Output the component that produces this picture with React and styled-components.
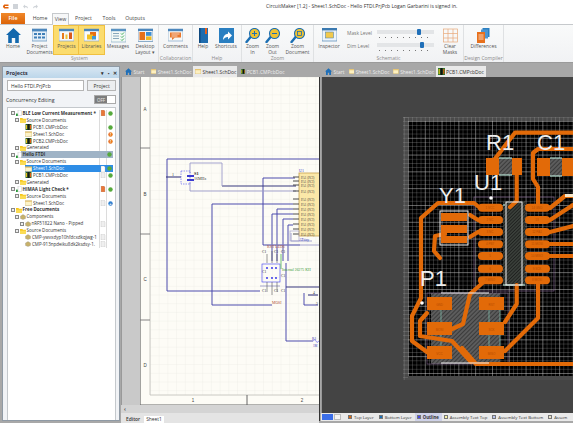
import React from "react";
import styled, { createGlobalStyle } from "styled-components";

const Global = createGlobalStyle`
  html, body { margin: 0; padding: 0; background: #fff; overflow: hidden; }
  body { font-family: "Open Sans", "Liberation Sans", sans-serif; }
  * { box-sizing: border-box; }
`;

const Win = styled.div`
  width: 573px; height: 423px; display: flex; flex-direction: column;
  background: #fff; font-size: 5.2px; color: #333; overflow: hidden;
`;
const TitleBar = styled.div`
  height: 12px; flex: none; display: flex; align-items: center; padding-left: 2px; gap: 3px; position: relative;
`;
const Title = styled.div`
  position: absolute; left: 266px; top: 3px; font-size: 5px; line-height: 7px; color: #333; white-space: nowrap;
`;
const QuickIcon = styled.svg`width: 7px; height: 7px; flex: none;`;
const MenuRow = styled.div`
  height: 12px; flex: none; display: flex; align-items: flex-end; padding-left: 1px; position: relative; z-index: 1;
`;
const FileTab = styled.div`
  width: 24px; height: 11px; background: linear-gradient(#f0882a, #dc6408); color: #fff; font-weight: 600;
  text-align: center; line-height: 11px; font-size: 5.4px; margin-right: 3px;
`;
const MenuTab = styled.div`
  height: ${p => (p.$on ? "12px" : "11px")}; width: ${p => p.$w}px; text-align: center; line-height: 11px; font-size: 5.2px; color: #444;
  background: ${p => (p.$on ? "#f6f7f8" : "transparent")};
  border: ${p => (p.$on ? "1px solid #c6c9cc" : "0")};
  border-bottom: 0; margin-bottom: ${p => (p.$on ? "-1px" : "0")};
`;
const Ribbon = styled.div`
  height: 39px; flex: none; display: flex; background: linear-gradient(#f9fafa, #f1f2f4);
  border-top: 1px solid #c6c9cc; border-bottom: 1px solid #9b9b9b;
`;
const Group = styled.div`
  width: ${p => p.$w}px; flex: none; display: flex; flex-direction: column; border-right: 1px solid #dfe1e3; padding: 1px 0 0 ${p => p.$pad || 0}px;
`;
const GroupRow = styled.div`display: flex; height: 28px; flex: none;`;
const GroupLabel = styled.div`
  text-align: center; font-size: 5px; line-height: 8px; color: #8a8a8a; white-space: nowrap;
`;
const Item = styled.div`
  width: ${p => p.$w}px; flex: none; display: flex; flex-direction: column; align-items: center; padding-top: 2px;
  background: ${p => (p.$on ? "#fbdc6e" : "transparent")}; outline: ${p => (p.$on ? "0.5px solid #f0c040" : "0")};
`;
const ItemIcon = styled.svg`width: 15px; height: 15px; flex: none;`;
const ItemLabel = styled.div`
  font-size: 4.9px; line-height: 6px; text-align: center; color: #555; white-space: pre-line;
`;
const SliderCol = styled.div`
  width: 93px; flex: none; display: flex; flex-direction: column; gap: 3px; padding: 3px 0 0 3px;
`;
const SliderRow = styled.div`display: flex; align-items: flex-start; height: 10px;`;
const SliderName = styled.div`width: 30px; font-size: 4.9px; line-height: 8px; color: #777;`;
const Track = styled.div`
  width: 57px; height: 10px; position: relative;
  background: linear-gradient(#e3e5e7, #e3e5e7) 0 1px / 100% 4px no-repeat;
`;
const Dots = styled.div`
  position: absolute; left: 2px; right: 2px; bottom: 1px; height: 1.5px;
  background: repeating-linear-gradient(90deg, #777 0 1px, transparent 1px 6px);
`;
const Thumb = styled.div`
  position: absolute; top: 0; left: ${p => p.$x}px; width: 3.5px; height: 6px; border-radius: 1px; background: #1f6fb8;
`;

const Body = styled.div`
  flex: 1; min-height: 0; display: flex; background: #a8a8a8; padding: 3px 0 2px 2px; gap: 1px;
`;
const ProjectsPanel = styled.div`
  width: 118px; flex: none; display: flex; flex-direction: column; background: #f1f3f6; border: 0.5px solid #8f9aa5;
`;
const PanelHead = styled.div`
  height: 11px; flex: none; display: flex; align-items: center; justify-content: space-between; padding: 0 2px 0 3px;
  background: linear-gradient(#d7e6f2, #bcd6ea); font-size: 5.4px; font-weight: 700; color: #334;
`;
const PanelBtns = styled.div`display: flex; gap: 3.5px; font-size: 4.5px; font-weight: 700; color: #333;`;
const InputRow = styled.div`display: flex; gap: 3px; padding: 2px 3px 0 4px; height: 13px; flex: none;`;
const NameInput = styled.div`
  width: 78px; height: 11px; background: #fff; border: 0.5px solid #b5b5b5; padding-left: 3px; line-height: 10px; font-size: 5px;
`;
const SmallBtn = styled.div`
  width: 29px; height: 11px; background: #eceef0; border: 0.5px solid #b5b5b5; text-align: center; line-height: 10px; font-size: 5px;
`;
const ConcRow = styled.div`
  display: flex; justify-content: space-between; align-items: center; padding: 3px 3px 0 3px; height: 14px; flex: none; font-size: 5.2px;
`;
const Toggle = styled.div`
  width: 22px; height: 9px; background: #fff; border: 0.5px solid #aaa; display: flex;
`;
const ToggleOff = styled.div`
  width: 12px; background: #7c7c7c; color: #eee; text-align: center; font-size: 4.4px; line-height: 8px;
`;
const TreeBox = styled.div`
  flex: 1; margin: 2px 3px 0 4px; background: #fff; border: 0.5px solid #c4c8cc; padding: 2px 2px 0 0; border-bottom: 0;
`;
const TreeRow = styled.div`
  height: 6.9px; display: flex; align-items: center; font-size: 4.5px; line-height: 6.9px; position: relative; color: #333;
  font-weight: ${p => (p.$bold ? 700 : 400)};
`;
const TreeName = styled.div`
  flex: 1; min-width: 0; display: flex; align-items: center; height: 100%; padding-left: ${p => p.$x}px; white-space: nowrap; overflow: hidden;
  background: ${p => (p.$sel === "blue" ? "linear-gradient(90deg,#fff 0 17px,#2e8de6 17px)" : p.$sel === "gray" ? "linear-gradient(90deg,#fff 0 13px,#9fb3c6 13px)" : "transparent")};
  color: ${p => (p.$sel === "blue" ? "#fff" : "inherit")};
`;
const StatusCell = styled.div`
  width: ${p => p.$w}px; flex: none; height: 100%; display: flex; align-items: center; justify-content: center;
  border-left: ${p => (p.$sel ? "0" : "0.5px solid #dcdcdc")};
  background: ${p => (p.$sel === "blue" ? "#2e8de6" : p.$sel === "gray" ? "#9fb3c6" : "transparent")};
`;
const Mini = styled.svg`width: 6px; height: 6px; flex: none; margin-right: ${p => p.$mr ?? 1}px;`;
const Expander = styled.div`
  width: 4px; height: 4px; flex: none; border: 0.5px solid #888; background: #eee; margin-right: 0.5px;
`;

const DocPane = styled.div`
  flex: none; width: ${p => p.$w}px; display: flex; flex-direction: column; min-height: 0; background: #a8a8a8;
`;
const DocTabs = styled.div`
  height: 11px; flex: none; display: flex; align-items: stretch; padding-left: 2px; background: #a8a8a8; gap: 1.5px;
`;
const DocTab = styled.div`
  width: ${p => p.$w}px; flex: none; display: flex; align-items: center; gap: 1.5px; padding-left: 2px; font-size: 4.9px; white-space: nowrap;
  color: ${p => (p.$on ? "#333" : "#eee")}; background: ${p => (p.$on ? "#e9e9e9" : "transparent")};
`;
const SchArea = styled.div`
  flex: 1; min-height: 0; display: flex; flex-direction: column; background: #fff; border-right: 1.5px solid #333;
`;
const SheetWrap = styled.div`
  flex: none; height: 328px; display: flex; padding-left: 18px; background: #c9c9c9; border-left: 1px solid #999; overflow: hidden;
`;
const ScrollBar = styled.div`
  height: 8px; flex: none; background: #d4d4d4; padding-left: 3px; font-size: 5px; line-height: 8px; font-weight: 700; color: #444;
`;
const SheetTabs = styled.div`
  height: 11px; flex: none; background: #e4e4e4; display: flex; align-items: center; font-size: 4.9px; padding: 2px 0 0 3px; gap: 2px;
`;
const SheetTab = styled.div`
  background: ${p => (p.$on ? "#fff" : "transparent")}; padding: 0 2px; line-height: 7px; font-weight: ${p => (p.$on ? 400 : 600)};
`;
const PcbArea = styled.div`
  flex: 1; min-height: 0; display: flex; background: #444; padding: 40px 0 31px 81px; border-left: 1px solid #999;
`;
const StatusBar = styled.div`
  height: 8px; flex: none; background: #e9e9e9; display: flex; align-items: center; font-size: 4.3px; white-space: nowrap; overflow: hidden; padding-left: 1px;
`;
const LayerSwatchBlock = styled.div`
  width: 11px; height: 6px; background: #3b6ee8; margin-right: 1px; flex: none;
`;
const Counter = styled.div`
  width: 7px; height: 6px; background: #f4f4f4; border: 0.5px solid #bbb; margin-right: 5px; flex: none;
`;
const LayerTab = styled.div`
  display: flex; align-items: center; gap: 2px; height: 100%; padding: 0 3px 0 2px; flex: none;
  background: ${p => (p.$on ? "#cfd2e8" : "transparent")}; font-weight: ${p => (p.$on ? 700 : 400)};
`;
const Swatch = styled.div`
  width: 4px; height: 4px; flex: none; background: ${p => p.$c}; border: 0.3px solid #777;
`;

/* ---------- small drawings ---------- */
const Folder = ({ mr }) => (
  <Mini viewBox="0 0 6 6" $mr={mr}><path d="M0 1h2.4l.6.8H6V6H0z" fill="#f5c518" /><path d="M0 2.6h6V6H0z" fill="#fbdc55" /></Mini>
);
const DocSmall = ({ c = "#e8e8e8", mr }) => (
  <Mini viewBox="0 0 6 6" $mr={mr}><path d="M1 0h3l1 1v5H1z" fill={c} stroke="#aaa" strokeWidth=".3" /></Mini>
);
const ProjDoc = () => (
  <Mini viewBox="0 0 6 6"><path d="M2 0h2.5l1 1v4.5H2z" fill="#fff" stroke="#999" strokeWidth=".3" /><rect x="0" y="3.6" width="1.8" height="2.4" fill="#2a9a3a" /></Mini>
);
const PcbMini = () => (
  <Mini viewBox="0 0 6 6" style={{ width: 7 }}><rect width="6" height="6" fill="#2a6a2a" /><rect x="2" y="0" width="2" height="6" fill="#1a1a1a" /><rect x=".4" y="1" width="1.2" height="4" fill="#e8c020" /><rect x="4.4" y="1" width="1.2" height="4" fill="#e05a10" /></Mini>
);
const SchMini = () => (
  <Mini viewBox="0 0 7 6" style={{ width: 7 }}><rect y=".8" width="7" height="4.6" fill="#fdf3c8" stroke="#b59a48" strokeWidth=".4" /><rect y=".8" width="7" height="1.1" fill="#e8c97a" /></Mini>
);
const GemMini = () => (
  <Mini viewBox="0 0 6 6"><path d="M3 .5l2.5 1.5v2.5L3 5.5.5 4.5V2z" fill="#c7b16a" stroke="#8c8c8c" strokeWidth=".3" /></Mini>
);
const Dot = ({ c, t }) => (
  <svg width="5" height="5" viewBox="0 0 5 5"><circle cx="2.5" cy="2.5" r="2.2" fill={c} /><text x="2.5" y="4" fontSize="4" fill="#fff" textAnchor="middle" fontWeight="700">{t}</text></svg>
);
const HomeTab = () => (
  <svg width="7" height="7" viewBox="0 0 7 7"><path d="M3.5.3L7 3.6H6V7H4.2V4.8H2.8V7H1V3.6H0z" fill="#1f6fb8" /></svg>
);
const TabSch = () => (
  <svg width="6" height="5" viewBox="0 0 6 5"><rect width="6" height="5" fill="#fdf0c0" stroke="#c9a95c" strokeWidth=".5" /><rect width="6" height="1.2" fill="#e6c470" /></svg>
);
const TabPcb = () => (
  <svg width="7" height="7" viewBox="0 0 7 7"><rect width="7" height="7" fill="#2f7a2f" /><rect x="2.4" width="2.2" height="7" fill="#111" /><rect x=".6" y="1" width="1.2" height="5" fill="#e2c21d" /><rect x="5.2" y="1" width="1.2" height="5" fill="#d9560f" /></svg>
);

const Icons = {
  home: <path d="M7.5 0L15 7h-2.2v8H9.2v-5H5.8v5H2.2V7H0z" fill="#1468ad" />,
  docs: <g><rect y="1" width="15" height="12" fill="#e4eef7" stroke="#5d8db8" strokeWidth=".7" /><rect y="1" width="15" height="2.4" fill="#4c87bd" /><g fill="#3f7fb8"><rect x="2" y="5" width="3" height="2" /><rect x="6" y="5" width="3" height="2" /><rect x="10" y="5" width="3" height="2" /><rect x="2" y="8.5" width="3" height="2" /><rect x="6" y="8.5" width="3" height="2" /><rect x="10" y="8.5" width="3" height="2" /></g></g>,
  projects: <g><rect y="1" width="15" height="12" fill="#f6f8fb" stroke="#7a9cbc" strokeWidth=".6" /><rect y="1" width="15" height="2.2" fill="#4a86bb" /><rect x="3" y="5" width="2" height="6" fill="#e77a1c" /><rect x="6.5" y="6.5" width="2" height="4.5" fill="#f0c030" /><rect x="10" y="4.5" width="3" height="6.5" fill="#d85a1c" /></g>,
  libraries: <g><rect y="1" width="15" height="12" fill="#fbfbfb" stroke="#7a9cbc" strokeWidth=".6" /><rect y="1" width="15" height="2.2" fill="#4a86bb" /><rect x="6" y="4" width="6" height="5.5" fill="#e76f13" /><rect x="3" y="6.5" width="6" height="5" fill="#f0c022" /><rect x="8" y="8" width="4" height="3.5" fill="#3f9ad6" /></g>,
  messages: <g><rect y="1" width="15" height="13" fill="#f4f9f6" stroke="#76a0be" strokeWidth=".6" /><rect y="1" width="15" height="2.2" fill="#5a93c2" /><g stroke="#6d93ad" strokeWidth=".8"><path d="M2 5.5h6M2 8h6M2 10.5h6" /></g><g stroke="#2ea64a" strokeWidth=".9" fill="none"><path d="M10 5.5l1 1 2-2M10 8.5l1 1 2-2M10 11.5l1 1 2-2" /></g></g>,
  desktop: <g><rect y="1" width="15" height="12.5" fill="#eef2f6" stroke="#5e8db8" strokeWidth=".7" /><rect y="1" width="15" height="2" fill="#4c87bd" /><rect x="1.5" y="4" width="5.5" height="8" fill="#e6701a" /><rect x="8" y="4" width="5.5" height="3.8" fill="#3f8ecf" /><rect x="8" y="8.4" width="5.5" height="3.6" fill="#efb921" /></g>,
  comments: <g><rect y="1" width="15" height="12" fill="#f7f7f5" stroke="#6d9cc5" strokeWidth=".6" /><rect y="1" width="15" height="2.2" fill="#4c87bd" /><rect x="2" y="4.5" width="11" height="5" fill="#e8762a" /><path d="M4 9.5v2.5l3-2.5z" fill="#e8762a" /><path d="M3.5 6h8M3.5 8h6" stroke="#fff" strokeWidth=".7" /></g>,
  help: <g><rect x="3" y="0" width="9" height="15" fill="#1e6cae" /><rect x="3" width="1.6" height="15" fill="#0f4a80" /><rect x="9" y="0" width="2" height="6" fill="#e7601a" /></g>,
  shortcuts: <g><rect x="0" y="0" width="15" height="15" fill="#2a7fc1" /><path d="M4 12c.2-4 2.2-6 5-6.2V3.5l4 4-4 4V9c-2-.1-3.8 1-5 3z" fill="#fff" /></g>,
  zoomIn: <g><path d="M6 8.5L1.5 14" stroke="#1c6fb3" strokeWidth="2.4" strokeLinecap="round" /><circle cx="9.5" cy="5.5" r="5" fill="#f1c230" stroke="#1c6fb3" strokeWidth="1.1" /><path d="M7 5.5h5M9.5 3v5" stroke="#1c6fb3" strokeWidth="1" /></g>,
  zoomOut: <g><path d="M6 8.5L1.5 14" stroke="#1c6fb3" strokeWidth="2.4" strokeLinecap="round" /><circle cx="9.5" cy="5.5" r="5" fill="#f1c230" stroke="#1c6fb3" strokeWidth="1.1" /><path d="M7 5.5h5" stroke="#1c6fb3" strokeWidth="1" /></g>,
  zoomDoc: <g><path d="M6 8.5L1.5 14" stroke="#1c6fb3" strokeWidth="2.4" strokeLinecap="round" /><circle cx="9.5" cy="5.5" r="5" fill="#f1c230" stroke="#1c6fb3" strokeWidth="1.1" /><rect x="7.5" y="3.5" width="4" height="4" fill="none" stroke="#1c6fb3" strokeWidth=".8" /></g>,
  inspector: <g><rect y="0" width="15" height="13" fill="#eef4fa" stroke="#4d85b6" strokeWidth=".7" /><rect width="15" height="2.4" fill="#3a79b0" /><rect x="3.5" y="4" width="8" height="6" fill="#f2c94c" stroke="#3a79b0" strokeWidth=".5" /></g>,
  clear: <g fill="none" stroke="#e8a878" strokeWidth=".7"><rect x=".5" y="1" width="14" height="13" /><path d="M5 1v13M10 1v13M.5 5.5h14M.5 10h14" /></g>,
  diff: <g><rect x="6.5" y="0" width="7" height="9" fill="#2a7fc1" /><rect x="5" y="1.5" width="7" height="9" fill="#4c96d2" /><rect x="1" y="4" width="8" height="11" fill="#e8701c" /><path d="M2.5 7h5M2.5 9h5M2.5 11h5" stroke="#fff" strokeWidth=".7" /></g>,
};

const RibbonBtn = ({ w, icon, on, children }) => (
  <Item $w={w} $on={on}>
    <ItemIcon viewBox="0 0 15 15">{Icons[icon]}</ItemIcon>
    <ItemLabel>{children}</ItemLabel>
  </Item>
);

/* ---------- project tree ---------- */
const treeRows = [
  { x: 3, exp: 1, icon: "proj", text: "BLE Low Current Measurement *", bold: 1, a: "doc", b: "g" },
  { x: 7, exp: 1, icon: "folder", text: "Source Documents" },
  { x: 17, icon: "pcb", text: "PCB1.CMPcbDoc", b: "g" },
  { x: 17, icon: "sch", text: "Sheet1.SchDoc", b: "o" },
  { x: 17, icon: "pcb", text: "PCB2.CMPcbDoc", b: "o" },
  { x: 7, exp: 1, icon: "folder", text: "Generated" },
  { x: 3, exp: 1, icon: "proj", text: "Hello FTDI", bold: 1, sel: "gray", b: "g" },
  { x: 7, exp: 1, icon: "folder", text: "Source Documents" },
  { x: 17, icon: "sch", text: "Sheet1.SchDoc", sel: "blue", a: "white", b: "g" },
  { x: 17, icon: "pcb", text: "PCB1.CMPcbDoc", a: "gray", b: "g" },
  { x: 7, exp: 1, icon: "folder", text: "Generated" },
  { x: 3, exp: 1, icon: "proj", text: "HIMAA Light Check *", bold: 1, a: "doc", b: "g" },
  { x: 7, exp: 1, icon: "folder", text: "Source Documents" },
  { x: 17, icon: "sch", text: "Sheet1.SchDoc", a: "gray", b: "p" },
  { x: 3, exp: 1, icon: "folder", text: "Free Documents", bold: 1 },
  { x: 7, exp: 1, icon: "gem", text: "Components" },
  { x: 12, exp: 1, icon: "gem", text: "nRF51822 Nano - Pipped", a: "gray" },
  { x: 7, exp: 1, icon: "folder", text: "Source Documents" },
  { x: 17, icon: "gem", text: "CMP-ywvxdyp10hfdcxdkqjwg-1", a: "gray" },
  { x: 17, icon: "gem", text: "CMP-913npdeiku8dk2ksdsy-1.", a: "gray" },
];
const rowIcon = { proj: <ProjDoc />, folder: <Folder />, pcb: <PcbMini />, sch: <SchMini />, gem: <GemMini /> };
const statusA = {
  doc: <DocSmall c="#e8773a" mr={0} />, white: <DocSmall c="#fff" mr={0} />, gray: <DocSmall c="#efefef" mr={0} />,
};
const statusB = {
  g: <Dot c="#55a93c" t="" />, o: <Dot c="#e8761e" t="!" />, p: <Dot c="#2f7fd0" t="+" />,
};

const Tree = () => (
  <TreeBox>
    {treeRows.map((r, i) => (
      <TreeRow key={i} $bold={r.bold}>
        <TreeName $x={r.x} $sel={r.sel}>
          {r.exp ? <Expander /> : null}
          {rowIcon[r.icon]}
          {r.text}
        </TreeName>
        <StatusCell $w={7} $sel={r.sel}>{statusA[r.a]}</StatusCell>
        <StatusCell $w={7} $sel={r.sel}>{statusB[r.b]}</StatusCell>
      </TreeRow>
    ))}
  </TreeBox>
);

/* ---------- schematic drawing: coordinates are page pixels, viewBox starts at (140,76) ---------- */
const wires = [
  "167,158 320,158", "167,158 167,290 260,290",
  "212,203 293,203", "212,203 212,304 272,304",
  "263,177 295,177", "263,177 263,244 300,244",
  "272,213 293,213", "272,213 272,260",
  "277,208 293,208", "277,208 277,260",
  "283,218 293,218", "283,218 283,260",
  "288,224 293,224", "288,224 288,260",
  "304,292 304,304 318,304", "286,262 286,340 313,340",
];
const darkWires = ["222,185 296,185", "286,286 320,286", "166,176 181,176", "308,294 318,294"];
const lightWires = [
  "190,162 222,162 222,185", "190,190 296,190", "190,162 190,172", "190,182 190,190",
  "260,285 280,285", "291,232 291,240 312,240", "265,244 320,244",
];
const pinRows = [176, 180, 184, 190, 198, 203, 208, 213, 218, 223, 228, 233];
const headerLabels = [[262, 252], [274, 252], [281, 252], [262, 291], [274, 291], [281, 291], [262, 272], [281, 276]];
const Schematic = () => (
  <svg width="181" height="328" viewBox="140 76 181 328" style={{ display: "block", flex: "none" }} fontFamily="'Liberation Serif', serif" fontSize="4.5">
    <defs>
      <pattern id="schGrid" x="150" y="76" width="8.7" height="8.7" patternUnits="userSpaceOnUse">
        <path d="M8.7 0H0V8.7" fill="none" stroke="#e9e9e4" strokeWidth=".6" />
      </pattern>
    </defs>
    <rect x="140" y="76" width="181" height="328" fill="#fdfcf6" />
    <rect x="150" y="76" width="171" height="318" fill="url(#schGrid)" />
    <path d="M140 76V404H321" fill="none" stroke="#666" strokeWidth="1.2" />
    <path d="M150 76V394H321" fill="none" stroke="#bdbdb8" strokeWidth=".8" />
    {[147, 233, 319].map(y => <path key={y} d={`M140 ${y}H150`} stroke="#777" strokeWidth=".9" />)}
    <path d="M247 394V404" stroke="#555" strokeWidth=".9" />
    {[["A", 108], ["B", 193], ["C", 278], ["D", 364]].map(([t, y]) => (
      <text key={t} x="145" y={y + 1.5} fontSize="4.5" textAnchor="middle" fill="#444" fontFamily="'Liberation Sans',sans-serif">{t}</text>
    ))}
    <text x="193" y="401" textAnchor="middle" fill="#444" fontFamily="'Liberation Sans',sans-serif">1</text>
    <text x="302" y="401" textAnchor="middle" fill="#444" fontFamily="'Liberation Sans',sans-serif">2</text>

    <g fill="none" stroke="#4444aa" strokeWidth=".95">{wires.map(p => <polyline key={p} points={p} />)}</g>
    <g fill="none" stroke="#38387e" strokeWidth="1.1">{darkWires.map(p => <polyline key={p} points={p} />)}</g>
    <g fill="none" stroke="#9a9aca" strokeWidth=".9">{lightWires.map(p => <polyline key={p} points={p} />)}</g>

    {/* crystal */}
    <rect x="181" y="170" width="9" height="13" fill="none" stroke="#4a4af0" strokeWidth=".6" strokeDasharray="1.5 1" />
    <rect x="187" y="174" width="7" height="2" fill="#3b3bd0" />
    <rect x="187" y="178" width="7" height="2" fill="#3b3bd0" />
    <text x="194" y="174" fill="#333" fontWeight="700">S1</text>
    <text x="194" y="179" fill="#333" fontSize="4">16MHz</text>
    <text x="172" y="175" fill="#333" fontSize="4">1</text>

    {/* chip */}
    <rect x="299" y="172" width="24" height="63" fill="#fbe8a8" stroke="#c9a350" strokeWidth=".8" />
    <text x="299" y="171" fill="#3a3ac0" fontSize="4">U1</text>
    {pinRows.map(y => (
      <g key={y}>
        <path d={`M293 ${y}H299`} stroke="#222" strokeWidth=".8" />
        <text x="301" y={y + 1.5} fontSize="3.2" fill="#444">PA1 (PCI)</text>
      </g>
    ))}
    <rect x="290" y="230" width="9" height="10" fill="none" stroke="#a6a6cf" strokeWidth=".7" />
    <text x="299" y="240" fill="#3a3ac0" fontSize="3.6">ATtiny</text>

    {/* programmer header */}
    <text x="267" y="247" fill="#b0503a" fontSize="4">RST LED1</text>
    <text x="272" y="303" fill="#b0503a" fontSize="3.8">MOSI</text>
    {headerLabels.map(([x, y]) => (
      <text key={x + "-" + y} x={x} y={y} fontSize="3.6" fill="#222">C1</text>
    ))}
    <rect x="262" y="263" width="18" height="18" fill="none" stroke="#3a3af0" strokeWidth=".6" />
    {[267, 272, 276].map(x => (
      <g key={x} fill="#2424e8"><circle cx={x} cy="267" r=".9" /><circle cx={x} cy="277" r=".9" /></g>
    ))}
    <path d="M267 253v9M272 250v12M277 253v9M267 281v10M272 281v13M277 281v10" stroke="#555" strokeWidth=".6" />
    <path d="M281 253V268" stroke="#3ab03a" strokeWidth=".7" />
    <text x="282" y="270" fill="#3a9a3a" fontSize="3.8">Internal 26275 KH</text>
    <text x="313" y="293" fontSize="3.6" fill="#333">4</text>
    <text x="316" y="304" fontSize="3.6" fill="#333">3</text>
    <text x="312" y="339" fontSize="3.6" fill="#3333b8">R1</text>
    <path d="M313 340l2-1.5 2 3 2-1.5" fill="none" stroke="#5a5af0" strokeWidth=".6" />
    <text x="313" y="346" fontSize="3.2" fill="#3333b8">1M</text>
  </svg>
);

/* ---------- PCB drawing: coordinates are page pixels, viewBox starts at (403,116) ---------- */
const Copper = "#e26a08";
const traces = [
  "491,163 515,131.7 573,131.7",
  "516.7,170 516.7,200 510,206",
  "516.7,284 516.7,303 505,321",
  "538,283 538,317 505,350",
  "487,278 470,293 463,323 452,328",
  "462,347 476,363 573,363",
  "427,312 420,320 420,335 452,340 471,361",
  "480,207 474,202 438,202 421,217 421,297 412,315 412,340 427,351",
  "538,207 538,186 533,178 533,152 538,148 573,148",
  "550,207 565,195 573,195",
  "550,219 573,204",
  "550,231 573,225",
  "550,243 573,243",
  "550,255 573,255",
  "470,214 478,219",
  "470,236 478,231",
  "445,233 435,235 434,250 440,257",
];
const uPins = [206.7, 219, 231, 243.3, 255, 267.7, 279.3];
const leftLbl = ["1 VCC", "2 NC", "3 NC", "4 PB7", "5", "6", "7 MISO"];
const rightLbl = ["14 GND", "13", "12 PA1", "11 MOSI", "10 MISO", "9 SCK", "8 MOSI"];
const pPads = [
  [427, 296, "GND"], [479, 296, "RST"], [427, 321, "MOSI"], [479, 321, "SCK"], [427, 345, "VCC"], [479, 345, "MISO"],
];
const PcbText = ({ x, y, children }) => (
  <text x={x} y={y} fontSize="22" fontFamily="'Liberation Sans',sans-serif" fill="#eee" fontWeight="400">{children}</text>
);
const PadText = ({ x, y, children }) => (
  <text x={x} y={y} fontSize="3" fill="#b84c00" textAnchor="middle" fontFamily="'Liberation Sans',sans-serif">{children}</text>
);
const Board = () => (
  <svg width="170" height="263" viewBox="403 116 170 263" style={{ display: "block", flex: "none" }}>
    <defs>
      <pattern id="fine" x="408" y="120" width="4.2" height="4.2" patternUnits="userSpaceOnUse">
        <path d="M4.2 0H0V4.2" fill="none" stroke="#9a9a9a" strokeWidth=".55" />
      </pattern>
      <pattern id="coarse" x="408" y="120" width="16.8" height="16.8" patternUnits="userSpaceOnUse">
        <path d="M16.8 0H0V16.8" fill="none" stroke="#d8d8d8" strokeWidth=".6" />
      </pattern>
      <pattern id="hatch" width="3" height="3" patternUnits="userSpaceOnUse" patternTransform="rotate(45)">
        <rect width="3" height="3" fill="#5c5c5c" />
        <path d="M0 0V3" stroke="#1a1a1a" strokeWidth="1" />
      </pattern>
      <pattern id="hatchDark" width="2.4" height="2.4" patternUnits="userSpaceOnUse" patternTransform="rotate(45)">
        <rect width="2.4" height="2.4" fill="#3a3f3a" />
        <path d="M0 0V2.4" stroke="#0c0c0c" strokeWidth="1" />
      </pattern>
    </defs>
    <rect x="403" y="116" width="170" height="263" fill="#4a4a4a" />
    <rect x="403" y="116" width="170" height="4" fill="url(#fine)" />
    <rect x="403" y="116" width="5" height="263" fill="url(#fine)" />
    <rect x="408" y="120" width="165" height="255" fill="#000" />
    <rect x="408" y="120" width="165" height="255" fill="url(#fine)" />
    <rect x="408" y="120" width="165" height="255" fill="url(#coarse)" />

    <rect x="503" y="200" width="22" height="85" fill="url(#hatchDark)" />
    <rect x="431" y="292" width="69" height="71" fill="url(#hatch)" />
    <rect x="499" y="157" width="13" height="17" fill="url(#hatch)" />
    <rect x="550" y="157" width="12" height="18" fill="url(#hatch)" />
    <path d="M441 296V358M489 296V358M500 296V358" stroke="#8fe0c8" strokeWidth=".7" opacity=".8" />
    <path d="M503 204h2M503 284h22M499 157h13M499 174h13M550 157h12M550 175h12" stroke="#cfe" strokeWidth="1" />
    <rect x="474" y="196" width="80" height="94" fill="none" stroke="#8a6a9a" strokeWidth=".6" />
    <rect x="427" y="292" width="81" height="71" fill="none" stroke="#8a6a9a" strokeWidth=".5" />

    <g fill="none" stroke={Copper} strokeWidth="4.2" strokeLinejoin="round" strokeLinecap="round">
      {traces.map(p => <polyline key={p} points={p} />)}
    </g>
    <rect x="486" y="157" width="13" height="17" fill={Copper} />
    <rect x="512" y="157" width="10" height="17" fill={Copper} />
    <rect x="537" y="157" width="13" height="18" fill={Copper} />
    <rect x="562" y="157" width="11" height="18" fill={Copper} />
    <rect x="441" y="224" width="26" height="8" fill={Copper} />
    <rect x="441" y="212" width="26" height="8" fill={Copper} />
    <rect x="441" y="235" width="26" height="7" fill={Copper} />
    {uPins.map((y, i) => (
      <g key={y}>
        <rect x="478" y={y - 4} width="25" height="8" rx="4" fill={Copper} />
        <rect x="525" y={y - 4} width="25" height="8" rx="4" fill={Copper} />
        <PadText x={490} y={y + 1}>{leftLbl[i]}</PadText>
        <PadText x={537} y={y + 1}>{rightLbl[i]}</PadText>
      </g>
    ))}
    {pPads.map(([x, y, t]) => (
      <g key={t}>
        <rect x={x} y={y} width="25" height="13" fill={Copper} />
        <PadText x={x + 12.5} y={y + 8.5}>{t}</PadText>
      </g>
    ))}
    <g fill="none" stroke="#f2f2f2" strokeWidth="1">
      <rect x="440" y="210" width="28" height="34" />
      <rect x="506" y="201" width="16" height="83" />
      <path d="M441 292H489M441 362H489" />
    </g>
    <circle cx="491" cy="197" r="1.8" fill="#fff" />
    <circle cx="422" cy="302" r="1.8" fill="#fff" />
    <rect x="565" y="193" width="8" height="3" fill="#f7e7c8" />
    <PcbText x={486} y={149}>R1</PcbText>
    <PcbText x={537} y={149}>C1</PcbText>
    <PcbText x={474} y={189}>U1</PcbText>
    <PcbText x={439} y={202}>Y1</PcbText>
    <PcbText x={420} y={285}>P1</PcbText>
  </svg>
);

const Tabs = ({ layout }) => (
  <DocTabs>
    <DocTab $w={layout[0]}><HomeTab />Start</DocTab>
    <DocTab $w={layout[1]}><TabSch />Sheet1.SchDoc</DocTab>
    <DocTab $w={layout[2]} $on={layout[4] === 2}><TabSch />Sheet1.SchDoc</DocTab>
    <DocTab $w={layout[3]} $on={layout[4] === 3}><TabPcb />PCB1.CMPcbDoc</DocTab>
  </DocTabs>
);

const layers = [
  ["Top Layer", "#dd6a10"], ["Bottom Layer", "#1b6fb5"], ["Outline", "#4a4ae8", 1],
  ["Assembly Text Top", "#f7f2a6"], ["Assembly Text Bottom", "#b9c4ee"], ["Assem", "#e9e2c8"],
];

export default function App() {
  return (
    <Win>
      <Global />
      <TitleBar>
        <QuickIcon viewBox="0 0 7 7"><path d="M6.5 1.5H2.2L1 3v1l1.2 1.5h4.3V4H3V3h3.5z" fill="#e2620a" /></QuickIcon>
        <QuickIcon viewBox="0 0 7 7"><rect x="1" y="1" width="5" height="5" fill="#cfd3d8" /></QuickIcon>
        <QuickIcon viewBox="0 0 7 7"><path d="M1 3.5L3 1.5v1.3c2 0 3 1 3 2.7-.8-1-1.6-1.3-3-1.3v1.3z" fill="#cfd3d8" /></QuickIcon>
        <QuickIcon viewBox="0 0 7 7"><path d="M6 3.5L4 1.5v1.3c-2 0-3 1-3 2.7.8-1 1.6-1.3 3-1.3v1.3z" fill="#cfd3d8" /></QuickIcon>
        <Title>CircuitMaker [1.2] - Sheet1.SchDoc - Hello FTDI.PrjPcb Logan Garbarini is signed in.</Title>
      </TitleBar>
      <MenuRow>
        <FileTab>File</FileTab>
        <MenuTab $w={24}>Home</MenuTab>
        <MenuTab $w={17} $on>View</MenuTab>
        <MenuTab $w={29}>Project</MenuTab>
        <MenuTab $w={22}>Tools</MenuTab>
        <MenuTab $w={30}>Outputs</MenuTab>
      </MenuRow>
      <Ribbon>
        <Group $w={159} $pad={1}>
          <GroupRow>
            <RibbonBtn w={24} icon="home">Home</RibbonBtn>
            <RibbonBtn w={29} icon="docs">{"Project\nDocuments"}</RibbonBtn>
            <RibbonBtn w={25} icon="projects" on>Projects</RibbonBtn>
            <RibbonBtn w={25} icon="libraries" on>Libraries</RibbonBtn>
            <RibbonBtn w={28} icon="messages">Messages</RibbonBtn>
            <RibbonBtn w={26} icon="desktop">{"Desktop\nLayout ▾"}</RibbonBtn>
          </GroupRow>
          <GroupLabel>System</GroupLabel>
        </Group>
        <Group $w={34}>
          <GroupRow><RibbonBtn w={33} icon="comments">Comments</RibbonBtn></GroupRow>
          <GroupLabel>Collaboration</GroupLabel>
        </Group>
        <Group $w={49}>
          <GroupRow>
            <RibbonBtn w={20} icon="help">Help</RibbonBtn>
            <RibbonBtn w={26} icon="shortcuts">Shortcuts</RibbonBtn>
          </GroupRow>
          <GroupLabel>Help</GroupLabel>
        </Group>
        <Group $w={72}>
          <GroupRow>
            <RibbonBtn w={21} icon="zoomIn">{"Zoom\nIn"}</RibbonBtn>
            <RibbonBtn w={19} icon="zoomOut">{"Zoom\nOut"}</RibbonBtn>
            <RibbonBtn w={31} icon="zoomDoc">{"Zoom\nDocument"}</RibbonBtn>
          </GroupRow>
          <GroupLabel>Zoom</GroupLabel>
        </Group>
        <Group $w={150}>
          <GroupRow>
            <RibbonBtn w={30} icon="inspector">Inspector</RibbonBtn>
            <SliderCol>
              <SliderRow><SliderName>Mask Level</SliderName><Track><Dots /><Thumb $x={40} /></Track></SliderRow>
              <SliderRow><SliderName>Dim Level</SliderName><Track><Dots /><Thumb $x={43} /></Track></SliderRow>
            </SliderCol>
            <RibbonBtn w={26} icon="clear">{"Clear\nMasks"}</RibbonBtn>
          </GroupRow>
          <GroupLabel>Schematic</GroupLabel>
        </Group>
        <Group $w={40}>
          <GroupRow><RibbonBtn w={39} icon="diff">Differences</RibbonBtn></GroupRow>
          <GroupLabel>Design Compiler</GroupLabel>
        </Group>
      </Ribbon>
      <Body>
        <ProjectsPanel>
          <PanelHead>Projects<PanelBtns><span>▾</span><span>▪</span><span>✕</span></PanelBtns></PanelHead>
          <InputRow><NameInput>Hello FTDI.PrjPcb</NameInput><SmallBtn>Project</SmallBtn></InputRow>
          <ConcRow>Concurrency Editing<Toggle><ToggleOff>OFF</ToggleOff></Toggle></ConcRow>
          <Tree />
        </ProjectsPanel>
        <DocPane $w={199}>
          <Tabs layout={[24, 43, 44, 46, 2]} />
          <SchArea>
            <SheetWrap><Schematic /></SheetWrap>
            <ScrollBar>‹</ScrollBar>
            <SheetTabs><SheetTab>Editor</SheetTab><SheetTab $on>Sheet1</SheetTab></SheetTabs>
          </SchArea>
        </DocPane>
        <DocPane $w={252}>
          <Tabs layout={[22, 43, 43, 50, 3]} />
          <PcbArea><Board /></PcbArea>
          <StatusBar>
            <LayerSwatchBlock /><Counter />
            {layers.map(([t, c, on]) => (
              <LayerTab key={t} $on={on}><Swatch $c={c} />{t}</LayerTab>
            ))}
          </StatusBar>
        </DocPane>
      </Body>
    </Win>
  );
}
